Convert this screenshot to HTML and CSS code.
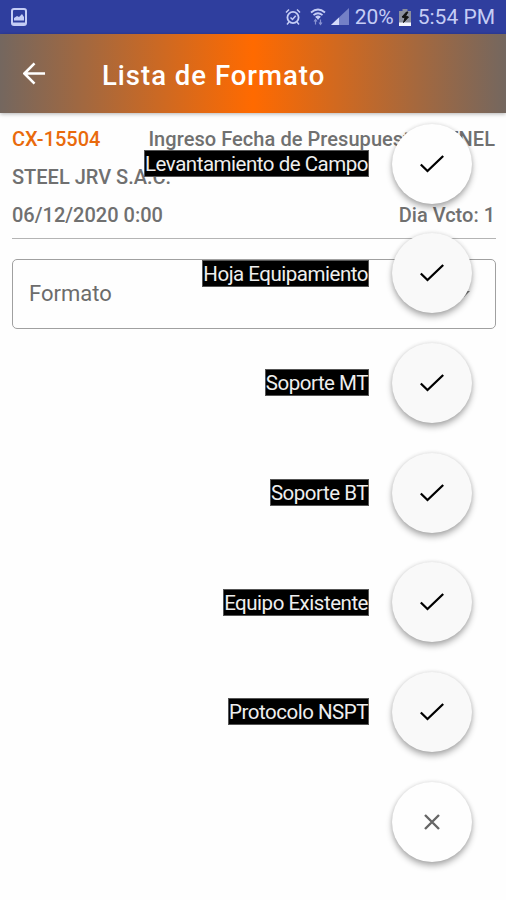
FILE: index.html
```html
<!DOCTYPE html>
<html lang="es">
<head>
    <meta charset="UTF-8">
    <meta name="viewport" content="width=device-width, initial-scale=1.0">
    <title>Lista de Formato</title>
    <link rel="stylesheet" href="styles.css">
</head>
<body>
    <div class="status-bar">
        <svg class="icon-picture" viewBox="0 0 16 18">
            <rect x="1" y="1" width="14" height="16" rx="2" fill="none" stroke="#c5cdf5" stroke-width="2"/>
            <path d="M3 12.500V10l3-2 2 1 3-3 2 3v3.500z" fill="#c5cdf5"/>
            <path d="M2 15.500h12" stroke="#c5cdf5" stroke-width="2"/>
        </svg>
        <div class="status-right">
            <svg class="icon-alarm" viewBox="0 0 16 18">
                <circle cx="8" cy="9.500" r="5.600" fill="none" stroke="#c5cdf5" stroke-width="1.800"/>
                <path d="M5.500 9.500l2 2 3.200-3.700M1 4.500l3-3M15 4.500l-3-3M4 14l-2 2.500M12 14l2 2.500" fill="none" stroke="#c5cdf5" stroke-width="1.500"/>
            </svg>
            <svg class="icon-wifi" viewBox="0 0 16 18">
                <path d="M1 4.500q7-6 14 0M3.500 7.200q4.500-4 9 0M5.800 9.500q2.200-2 4.400 0" fill="none" stroke="#c5cdf5" stroke-width="1.800"/>
                <path d="M6 9h4l-2 3z" fill="#c5cdf5"/>
                <path d="M5.500 11.500v5M4 13.500l1.500-2 1.500 2M10.500 11.500v5M9 14.500l1.500 2 1.500-2" fill="none" stroke="#8892d2" stroke-width="1.200"/>
            </svg>
            <svg class="icon-signal" viewBox="0 0 18 18">
                <path d="M0 17L18 0v17z" fill="#7480c6"/>
                <path d="M0 17l8-7.500V17z" fill="#d5dbfa"/>
            </svg>
            <span class="battery-text">20%</span>
            <svg class="icon-battery" viewBox="0 0 12 17">
                <path d="M3.500 0h5v2H12v15H0V2h3.500z" fill="#8b8f9e"/>
                <path d="M0 13.500h12V17H0z" fill="#f4f6ff"/>
                <path d="M7.500 3L3 8l3 1-1.500 4.500L9.500 8l-3-1 2.500-4z" fill="#111" stroke="#111"/>
            </svg>
            <span class="clock">5:54 PM</span>
        </div>
    </div>

    <header class="toolbar">
        <svg class="back" viewBox="0 0 24 24">
            <path d="M23 12H2M12 1.500L1.500 12 12 22.500" fill="none" stroke="#fff" stroke-width="2.700"/>
        </svg>
        <h1>Lista de Formato</h1>
    </header>

    <main class="content">
        <div class="info">
            <div class="row">
                <span class="code">CX-15504</span>
                <span class="stage">Ingreso Fecha de Presupuesto al ENEL</span>
            </div>
            <div class="row">
                <span>STEEL JRV S.A.C.</span>
            </div>
            <div class="row">
                <span>06/12/2020 0:00</span>
                <span>Dia Vcto: 1</span>
            </div>
        </div>

        <div class="select">
            <span>Formato</span>
            <span class="arrow"></span>
        </div>
    </main>

    <div class="fab-menu">
        <div class="fab-item">
            <span class="fab-label">Levantamiento de Campo</span>
            <button class="fab fab-light"><svg viewBox="0 0 24 18"><path d="M.8 9.500L7.500 16 23.200 1" /></svg></button>
        </div>
        <div class="fab-item">
            <span class="fab-label">Hoja Equipamiento</span>
            <button class="fab"><svg viewBox="0 0 24 18"><path d="M.8 9.500L7.500 16 23.200 1" /></svg></button>
        </div>
        <div class="fab-item">
            <span class="fab-label">Soporte MT</span>
            <button class="fab"><svg viewBox="0 0 24 18"><path d="M.8 9.500L7.500 16 23.200 1" /></svg></button>
        </div>
        <div class="fab-item">
            <span class="fab-label">Soporte BT</span>
            <button class="fab"><svg viewBox="0 0 24 18"><path d="M.8 9.500L7.500 16 23.200 1" /></svg></button>
        </div>
        <div class="fab-item">
            <span class="fab-label">Equipo Existente</span>
            <button class="fab"><svg viewBox="0 0 24 18"><path d="M.8 9.500L7.500 16 23.200 1" /></svg></button>
        </div>
        <div class="fab-item">
            <span class="fab-label">Protocolo NSPT</span>
            <button class="fab"><svg viewBox="0 0 24 18"><path d="M.8 9.500L7.500 16 23.200 1" /></svg></button>
        </div>
        <div class="fab-item">
            <button class="fab fab-light fab-close"><svg viewBox="0 0 16 16"><path d="M1 1l14 14M15 1L1 15" /></svg></button>
        </div>
    </div>
</body>
</html>
```

FILE: styles.css
```css
* {
    margin: 0;
    padding: 0;
    box-sizing: border-box;
}

body {
    font-family: Roboto, 'Noto Sans', sans-serif;
    background: #fefefe;
    height: 900px;
    position: relative;
    overflow: hidden;
}

svg {
    display: block;
    flex: none;
}

.status-bar {
    display: flex;
    align-items: center;
    justify-content: space-between;
    height: 34px;
    padding: 0 11px;
    background: #2f3e9e;
    color: #c5cdf5;
    font-size: 21px;
}

.status-right {
    display: flex;
    align-items: center;
    white-space: nowrap;
}

.icon-picture {
    width: 16px;
    height: 18px;
}

.icon-alarm {
    width: 16px;
    height: 18px;
    margin-right: 9px;
}

.icon-wifi {
    width: 16px;
    height: 18px;
    margin-right: 5px;
}

.icon-signal {
    width: 18px;
    height: 18px;
    margin-right: 6px;
}

.icon-battery {
    width: 12px;
    height: 17px;
    margin: 0 7px 0 5px;
}

.toolbar {
    display: flex;
    align-items: center;
    height: 79px;
    padding: 3px 23px 0;
    background: linear-gradient(90deg, #74675f 0%, #ff6a00 50%, #74675f 100%);
    box-shadow: 0 1px 4px rgba(0, 0, 0, 0.3);
}

.back {
    width: 23px;
    height: 23px;
    margin-right: 56px;
    margin-bottom: 3px;
}

h1 {
    color: #fff;
    font-size: 27.5px;
    font-weight: 500;
    letter-spacing: 1px;
}

.content {
    padding: 7px 10px 0 12px;
}

.info {
    border-bottom: 1px solid #b4b4b4;
    padding-bottom: 4px;
    color: #707070;
    font-size: 20px;
    font-weight: 500;
}

.row {
    display: flex;
    justify-content: space-between;
    padding-right: 1px;
    line-height: 38px;
    white-space: nowrap;
}

.code {
    color: #e96a0c;
}

.stage {
    letter-spacing: 0.06px;
}

.select {
    display: flex;
    align-items: center;
    justify-content: space-between;
    height: 70px;
    margin-top: 20px;
    padding: 0 25px 1px 16px;
    border: 1px solid #a0a0a0;
    border-radius: 5px;
    color: #6c6c6c;
    font-size: 22px;
}

.arrow {
    border: 6px solid transparent;
    border-top-color: #777;
    border-bottom: 0;
}

/* floating menu over the page */
.fab-menu {
    position: absolute;
    top: 123.5px;
    right: 34px;
    display: flex;
    flex-direction: column;
    gap: 29.7px;
}

.fab-item {
    display: flex;
    align-items: center;
    justify-content: flex-end;
    gap: 23px;
}

.fab-label {
    padding-top: 1px;
    background: #000;
    border: 1px solid #555;
    color: #eee;
    font-size: 20.5px;
    letter-spacing: -0.48px;
    line-height: 24px;
    white-space: nowrap;
}

.fab {
    display: flex;
    align-items: center;
    justify-content: center;
    width: 80px;
    height: 80px;
    border: none;
    border-radius: 50%;
    background: #f9f9f9;
    box-shadow: 0 4px 6px rgba(0, 0, 0, 0.3), 0 0 4px rgba(0, 0, 0, 0.12);
}

.fab-light {
    background: #fefefe;
}

.fab svg {
    width: 24px;
    height: 18px;
    fill: none;
    stroke: #000;
    stroke-width: 2.3;
}

.fab-close svg {
    width: 16px;
    height: 16px;
    stroke: #666;
    stroke-width: 2.4;
}
```
